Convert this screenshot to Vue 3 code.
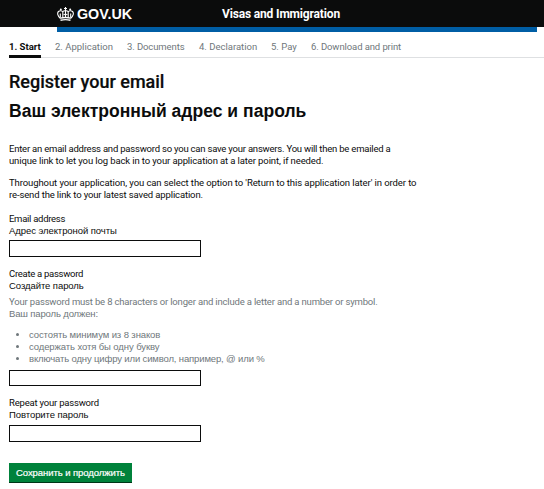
<script setup>
import {ref} from 'vue';

const steps = [
  {label: '1. Start', name: 'start'},
  {label: '2. Application', name: 'application'},
  {label: '3. Documents', name: 'documents'},
  {label: '4. Declaration', name: 'declaration'},
  {label: '5. Pay', name: 'pay'},
  {label: '6. Download and print', name: 'print'},
];
const current = ref('start');
const email = ref('');
const password = ref('');
const repeated = ref('');
</script>

<template>
  <header class="header">
    <div class="logo">
      <svg class="crown" viewBox="0 0 17 14" width="17" height="14">
        <g fill="none" stroke="#fff" stroke-width="1.100">
          <path d="M8.500 0v4M7 1.500h3"/>
          <path d="M3.500 11.500C.5 9 0 6 1.500 4.500 3 3.200 5 3.500 5.800 5v5.500"/>
          <path d="M13.500 11.500c3-2.500 3.500-5.500 2-7-1.500-1.300-3.500-1-4.300.5v5.500"/>
          <path d="M5.800 5C6.500 3.500 8 3.500 8.500 4.500 9 3.500 10.500 3.500 11.200 5M8.500 4.500v6"/>
          <path d="M3.300 6.500v4M13.700 6.500v4"/>
          <path d="M3.300 11.200c3.500-1 7-1 10.400 0M3.500 13.200c3.300-.8 6.700-.8 10 0" stroke-width="1.400"/>
        </g>
        <g fill="#fff">
          <circle cx="3.800" cy="2.600" r="1"/>
          <circle cx="13.200" cy="2.600" r="1"/>
          <circle cx="7.200" cy="7.500" r=".8"/>
          <circle cx="9.800" cy="7.500" r=".8"/>
        </g>
      </svg>
      <span class="logo-text">GOV.UK</span>
    </div>
    <span class="service">Visas and Immigration</span>
  </header>
  <div class="blue-bar"/>

  <nav class="steps">
    <span v-for="step in steps" :key="step.name" class="step" :class="[step.name, {current: step.name === current}]">{{step.label}}</span>
  </nav>

  <main class="content">
    <h1>Register your email</h1>
    <h1 class="ru">Ваш электронный адрес и пароль</h1>

    <p class="intro">
      <span class="intro-first">Enter an email address and password so you can save your answers. You will then be emailed a</span><br>
      <span class="intro-second">unique link to let you log back in to your application at a later point, if needed.</span>
    </p>
    <p>
      <span class="return-first">Throughout your application, you can select the option to 'Return to this application later' in order to</span><br>
      <span class="return-second">re-send the link to your latest saved application.</span>
    </p>

    <div class="field">
      <label for="email"><span class="en">Email address</span><br><span class="ru">Адрес электроной почты</span></label>
      <input id="email" v-model="email" type="text">
    </div>

    <div class="field">
      <label for="password"><span class="en">Create a password</span><br><span class="ru">Создайте пароль</span></label>
      <div class="hint">
        <span class="hint-en">Your password must be 8 characters or longer and include a letter and a number or symbol.</span><br>
        <span class="ru hint-ru">Ваш пароль должен:</span>
        <ul class="ru">
          <li>состоять минимум из 8 знаков</li>
          <li>содержать хотя бы одну букву</li>
          <li class="symbols">включать одну цифру или символ, например, @ или %</li>
        </ul>
      </div>
      <input id="password" v-model="password" class="short" type="password">
    </div>

    <div class="field">
      <label for="repeated"><span class="en repeat">Repeat your password</span><br><span class="ru">Повторите пароль</span></label>
      <input id="repeated" v-model="repeated" class="last" type="password">
    </div>

    <button type="button" class="ru">Сохранить и продолжить</button>
  </main>
</template>

<style>
body {
  background: #fff;
}
</style>

<style scoped>
.header {
  display: flex;
  align-items: center;
  height: 27px;
  background: #0b0c0c;
  color: #fff;
  font-weight: 700;
}

.logo {
  display: flex;
  align-items: center;
  width: 165px;
  padding-left: 57px;
  gap: 3px;
}

.logo-text {
  font-family: "Liberation Sans", Arial, sans-serif;
  font-size: 14.3px;
}

.service {
  font-family: Roboto, "Liberation Sans", sans-serif;
  font-size: 12px;
  letter-spacing: -0.16px;
}

.blue-bar {
  height: 5px;
  margin: 0 7px 0 57px;
  background: #005ea5;
}

.steps {
  display: flex;
  gap: 14px;
  height: 25px;
  margin-left: 9px;
  border-bottom: 1px solid #dee0e2;
  font: 9.5px/29px Roboto, "Liberation Sans", sans-serif;
  color: #6f777b;
  white-space: nowrap;
}

.step {
  width: 58px;
}

.start {
  width: 32px;
}

.documents {
  letter-spacing: -0.1px;
}

.pay {
  width: 26px;
}

.print {
  width: auto;
  letter-spacing: -0.1px;
}

.current {
  height: 23px;
  border-bottom: 3px solid #0b0c0c;
  color: #0b0c0c;
  font-weight: 700;
}

.content {
  padding: 9px 9px 0;
  font: 9.5px/12px Roboto, "Liberation Sans", sans-serif;
  color: #0b0c0c;
  white-space: nowrap;
}

.ru {
  font-family: "Liberation Sans", Arial, sans-serif;
  letter-spacing: -0.07px;
}

.en {
  letter-spacing: -0.28px;
}

.repeat {
  letter-spacing: -0.2px;
}

h1 {
  margin: 0;
  font-size: 18px;
  line-height: 29px;
  font-weight: 500;
  -webkit-text-stroke: 0.2px #0b0c0c;
}

h1.ru {
  margin-top: 1px;
  font-size: 17.5px;
  font-weight: 700;
  letter-spacing: 0.03px;
  -webkit-text-stroke: 0;
}

p {
  margin: 0 0 10px;
}

.intro {
  margin-top: 17px;
}

.intro-first {
  letter-spacing: -0.215px;
}

.intro-second {
  letter-spacing: -0.115px;
}

.return-first {
  letter-spacing: -0.09px;
}

.return-second {
  letter-spacing: -0.13px;
}

p + .field {
  margin-top: 12px;
}

.field {
  margin-bottom: 11px;
}

label {
  display: block;
}

input {
  display: block;
  box-sizing: border-box;
  width: 192px;
  height: 17px;
  margin-top: 3px;
  padding: 0 3px;
  border: 1px solid #0b0c0c;
  border-radius: 0;
}

.short {
  height: 16px;
  margin-top: 5px;
}

.last {
  margin-top: 4px;
}

.hint {
  margin-top: 4px;
  color: #6f777b;
}

.hint-en {
  letter-spacing: -0.175px;
}

.hint-ru {
  letter-spacing: -0.14px;
}

ul {
  margin: 9px 0 0;
  padding-left: 20px;
}

li {
  letter-spacing: -0.1px;
}

.symbols {
  letter-spacing: -0.14px;
}

button {
  width: 123px;
  height: 20px;
  margin-top: 10px;
  padding: 0;
  border: 0;
  border-bottom: 1px solid #003618;
  background: #00823b;
  color: #fff;
  font-size: 9.5px;
  -webkit-text-stroke: 0.2px #fff;
}
</style>
